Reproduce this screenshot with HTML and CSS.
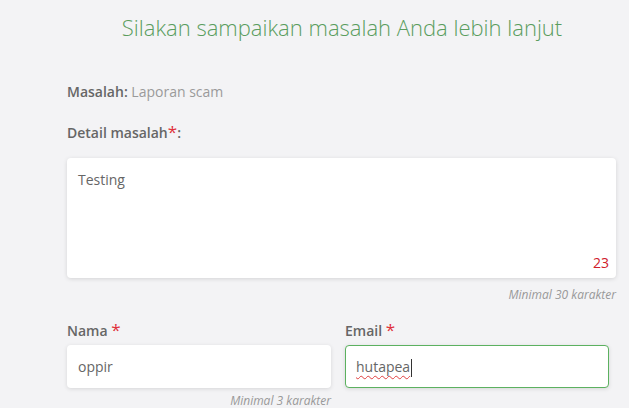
FILE: index.html
```html
<!DOCTYPE html>
<html>
<head>
<meta charset="utf-8">
<link rel="stylesheet" href="styles.css">
</head>
<body>
<div class="page">
  <h1 class="title">Silakan sampaikan masalah Anda lebih lanjut</h1>
  <p class="issue"><span class="label">Masalah:</span> <span class="value">Laporan scam</span></p>
  <p class="field-label detail-label">Detail masalah<span class="req">*</span>:</p>
  <div class="textarea-box">
    <div class="textarea-text">Testing</div>
    <div class="counter">23</div>
  </div>
  <div class="hint">Minimal 30 karakter</div>
  <div class="row">
    <div class="col">
      <div class="field-label">Nama <span class="req">*</span></div>
      <div class="input">oppir</div>
      <div class="hint small">Minimal 3 karakter</div>
    </div>
    <div class="col">
      <div class="field-label">Email <span class="req">*</span></div>
      <div class="input focused"><span class="spell">hutapea</span><span class="caret"></span></div>
    </div>
  </div>
</div>
</body>
</html>
```
FILE: styles.css
```css
html, body {
  margin: 0;
  padding: 0;
  background: #f3f3f5;
  font-family: "Open Sans", "Noto Sans", sans-serif;
  color: #666;
}
.page {
  width: 550px;
  margin-left: 67px;
  padding-top: 12px;
}
.title {
  margin: 0;
  font-weight: 300;
  font-size: 22px;
  line-height: 30px;
  color: #5a9d5e;
  text-align: center;
}
.issue {
  margin: 40px 0 0;
  font-size: 14px;
  line-height: 20px;
}
.label {
  font-weight: 600;
  color: #666;
}
.value {
  color: #9a9a9a;
}
.field-label {
  font-size: 14px;
  line-height: 20px;
  font-weight: 600;
  color: #666;
}
.detail-label {
  margin: 20px 0 0;
}
.req {
  color: #e0303a;
  font-size: 17px;
  font-weight: 400;
}
.textarea-box {
  margin-top: 15px;
  height: 120px;
  width: 549px;
  background: #fff;
  border-radius: 4px;
  box-shadow: 0 1px 4px rgba(0,0,0,0.13);
  box-sizing: border-box;
  padding: 12px 7px 6px 11px;
  display: flex;
  flex-direction: column;
  justify-content: space-between;
}
.textarea-text {
  font-size: 14px;
  line-height: 20px;
  color: #666;
}
.counter {
  align-self: flex-end;
  font-size: 14px;
  line-height: 18px;
  color: #d0202a;
}
.hint {
  font-size: 12px;
  font-style: italic;
  color: #999;
  text-align: right;
  width: 549px;
  margin-top: 9px;
  line-height: 16px;
}
.hint.small {
  width: auto;
  margin-top: 5px;
}
.row {
  display: grid;
  grid-template-columns: 264px 264px;
  column-gap: 14px;
  margin-top: 17px;
}
.col .field-label {
  margin-bottom: 4px;
}
.input {
  height: 43px;
  box-sizing: border-box;
  background: #fff;
  border-radius: 4px;
  box-shadow: 0 1px 4px rgba(0,0,0,0.12);
  padding: 0 11px;
  font-size: 14px;
  line-height: 43px;
  color: #666;
}
.input.focused {
  border: 1px solid #5cb160;
  line-height: 41px;
  padding: 0 10px;
}
.spell {
  text-decoration: underline wavy #e04040;
  text-decoration-thickness: 1px;
  text-underline-offset: 3px;
}
.caret {
  display: inline-block;
  width: 1px;
  height: 18px;
  background: #333;
  vertical-align: middle;
  margin-left: 1px;
}
```
